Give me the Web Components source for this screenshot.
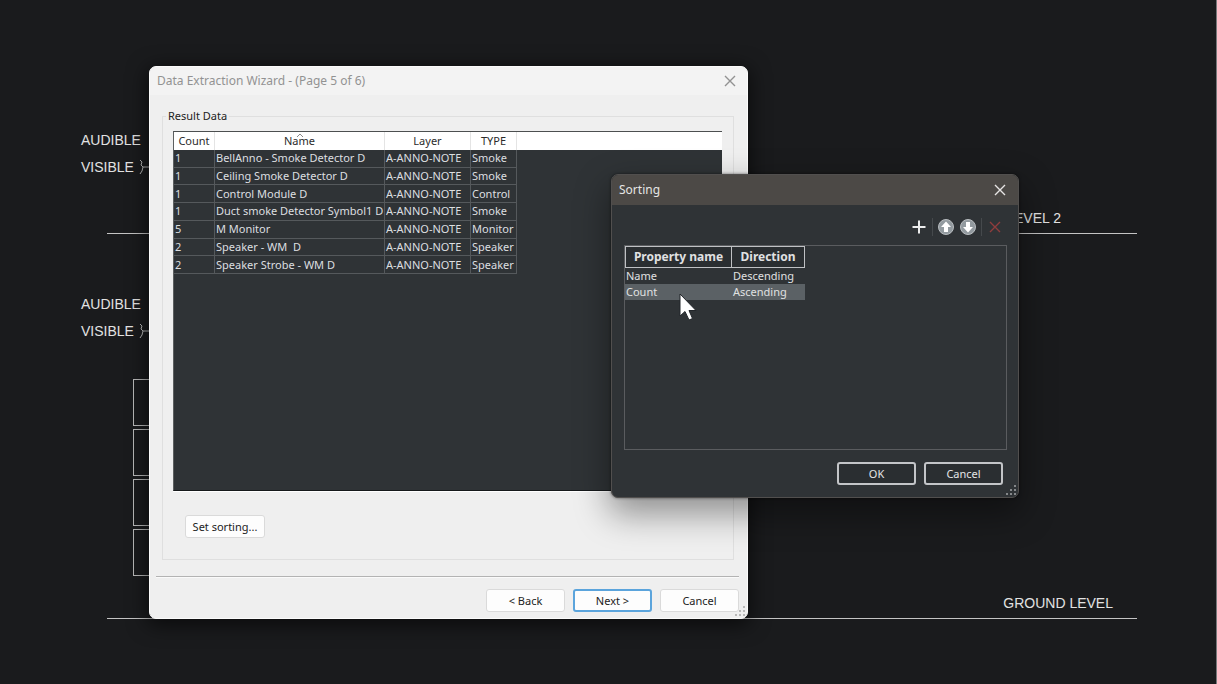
<!DOCTYPE html>
<html lang="en">
<head>
<meta charset="utf-8">
<meta name="viewport" content="width=device-width, initial-scale=1">
<title>Data Extraction Wizard</title>
<style>
html, body { margin: 0; height: 100%; background: #1a1b1d; }
body { font: 11px/16px "Noto Sans", "Open Sans", sans-serif; overflow: hidden; }
</style>
</head>
<body>
<work-desktop></work-desktop>

<script>
function define(name, html, setup) {
  const tpl = document.createElement('template');
  tpl.innerHTML = html;
  customElements.define(name, class extends HTMLElement {
    constructor() {
      super();
      this.attachShadow({ mode: 'open' }).append(tpl.content.cloneNode(true));
    }
    connectedCallback() { if (setup) setup(this, this.shadowRoot); }
  });
}

/* Push button in light and dark variants */
define('push-button', `
<style>
:host { display: block; width: 79px; height: 23px; }
button { box-sizing: border-box; width: 100%; height: 100%; padding: 0; font: inherit; color: #222;
  background: #fdfdfd; border: 1px solid #dadada; border-radius: 3px; }
:host([primary]) button { border: 2px solid #5ba4dc; }
:host([dark]) button { color: #e4e5e6; background: #2a2e31; border: 2px solid #c3c5c8; border-radius: 3px; }
</style>
<button type="button"><slot></slot></button>`);

/* Window frame with title bar, body and resize grip */
define('app-window', `
<style>
:host { box-sizing: border-box; display: flex; flex-direction: column; overflow: hidden; border-radius: 7px;
  border: 1px solid #fbfbfb; background: #efefef; color: #222; box-shadow: 0 4px 20px 2px #0009; }
header { flex: none; display: flex; align-items: center; justify-content: space-between; height: 28px;
  padding: 0 10px 0 7px; background: #f3f3f3; color: #929292; font-size: 12px; }
h1 { margin: 0; font: inherit; white-space: nowrap; }
button { display: block; width: 14px; height: 14px; padding: 0; border: 0; background: none; color: inherit; }
svg { display: block; }
main { flex: 1; min-height: 0; display: flex; flex-direction: column; }
.grip { position: absolute; right: 2px; bottom: 2px; color: #b8b8b8; }
:host([dark]) { background: #2f3336; color: #e0e1e2; border-color: #514f4e; box-shadow: 0 14px 34px 2px #0006, 0 0 3px #0008; }
:host([dark]) header { background: #4c4946; color: #e6e5e4; height: 30px; padding-right: 11px; }
:host([dark]) .grip { color: #85888a; }
</style>
<header>
  <h1></h1>
  <button type="button" aria-label="Close"><svg width="14" height="14" viewBox="0 0 14 14"><path d="M2 2 12 12M12 2 2 12" stroke="currentColor" stroke-width="1.4" fill="none"/></svg></button>
</header>
<main><slot></slot></main>
<svg class="grip" width="11" height="11" viewBox="0 0 11 11" fill="currentColor"><path d="M9 1h2v2H9zM5 5h2v2H5zM9 5h2v2H9zM1 9h2v2H1zM5 9h2v2H5zM9 9h2v2H9z"/></svg>`,
(el, root) => { root.querySelector('h1').textContent = el.getAttribute('heading'); });

/* Extracted rows */
define('result-grid', `
<style>
:host { box-sizing: border-box; display: block; overflow: hidden; background: #2f3336; color: #dddfe0;
  border: solid; border-width: 1px 0 1px 1px; border-color: #4c4f50 #fff #16191b #5c5f60; box-shadow: 0 1px #fff; }
.bar { background: linear-gradient(#fff 18px, transparent 18px); }
table { border-collapse: separate; border-spacing: 0; table-layout: fixed; width: 343px; height: 142px; }
th, td { padding: 0; line-height: 14px; white-space: pre; overflow: hidden; box-sizing: border-box; }
th { height: 18px; font-weight: 400; color: #2b2b2b; border-right: 1px solid #e4e4e4; position: relative; }
td { text-align: left; padding-left: 1px; border: solid #55595c; border-width: 0 1px 1px 0; }
svg { position: absolute; top: 1px; left: 50%; margin-left: -4px; }
</style>
<div class="bar"><table>
<colgroup><col style="width:41px"><col style="width:170px"><col style="width:86px"><col style="width:46px"></colgroup>
<thead><tr><th>Count</th><th>Name<svg width="8" height="5" viewBox="0 0 8 5"><path d="M1 4 4 1 7 4" fill="none" stroke="#8a8a8a"/></svg></th><th>Layer</th><th>TYPE</th></tr></thead>
<tbody></tbody></table></div>`,
(el, root) => {
  const rows = [
    [1, 'BellAnno - Smoke Detector D', 'Smoke'], [1, 'Ceiling Smoke Detector D', 'Smoke'],
    [1, 'Control Module D', 'Control'], [1, 'Duct smoke Detector Symbol1 D', 'Smoke'],
    [5, 'M Monitor', 'Monitor'], [2, 'Speaker - WM  D', 'Speaker'], [2, 'Speaker Strobe - WM D', 'Speaker']];
  root.querySelector('tbody').innerHTML = rows.map(([n, name, type]) =>
    `<tr><td>${n}</td><td>${name}</td><td>A-ANNO-NOTE</td><td>${type}</td></tr>`).join('');
});

/* Wizard page */
define('wizard-page', `
<style>
:host { flex: 1; min-height: 0; display: flex; flex-direction: column; padding: 13px 8px 6px 6px; }
fieldset { flex: 1; min-height: 0; min-width: 0; box-sizing: border-box; margin: 0 5px 0 6px; padding: 0 11px 21px 10px; border: 1px solid #dfdfdf; }
legend { padding: 0 2px; margin-left: -7px; height: 16px; }
.col { display: flex; flex-direction: column; height: 100%; padding-top: 7px; box-sizing: border-box; }
result-grid { flex: 1; min-height: 0; margin-bottom: 24px; }
.set { width: 80px; margin-left: 12px; }
hr { margin: 16px 0 12px; border: 0; height: 1px; background: #b3b3b3; box-shadow: 0 1px #fafafa; flex: none; width: 100%; }
footer { display: flex; justify-content: flex-end; gap: 8px; }
</style>
<fieldset><legend>Result Data</legend>
  <div class="col"><result-grid></result-grid><push-button class="set">Set sorting...</push-button></div>
</fieldset>
<hr>
<footer><push-button>&lt; Back</push-button><push-button primary>Next &gt;</push-button><push-button>Cancel</push-button></footer>`);

/* Toolbar of the sorting window */
define('sort-toolbar', `
<style>
:host { display: flex; justify-content: flex-end; align-items: center; gap: 4px; height: 18px; padding-right: 3px; }
button { width: 18px; height: 18px; padding: 0; border: 0; background: none; }
i { width: 1px; height: 18px; background: #45494c; }
svg { display: block; }
</style>
<button type="button" aria-label="Add"><svg width="18" height="18" viewBox="0 0 18 18"><path d="M9 2.5v13M2.500 9h13" stroke="#eceded" stroke-width="2"/></svg></button>
<i></i>
<button type="button" aria-label="Move up"><svg width="18" height="18" viewBox="0 0 18 18"><circle cx="9" cy="9" r="7.500" fill="#929a9f" stroke="#b9bdc0"/><path d="M9 3.500 14 9h-3v5H7V9H4z" fill="#fff"/></svg></button>
<button type="button" aria-label="Move down"><svg width="18" height="18" viewBox="0 0 18 18"><circle cx="9" cy="9" r="7.500" fill="#929a9f" stroke="#b9bdc0"/><path d="M9 14.500 14 9h-3V4H7v5H4z" fill="#fff"/></svg></button>
<i></i>
<button type="button" aria-label="Remove"><svg width="18" height="18" viewBox="0 0 18 18"><path d="M4 4 14 14M14 4 4 14" stroke="#8f3d3d" stroke-width="1.400"/></svg></button>`);

/* Sorting form */
define('sort-form', `
<style>
:host { flex: 1; min-height: 0; display: flex; flex-direction: column; padding: 13px 11px 12px 12px; }
.list { flex: 1; min-height: 0; margin-top: 9px; border: 1px solid #5a5c5f; overflow: hidden; }
table { border-collapse: separate; border-spacing: 0; table-layout: fixed; width: 180px; }
th { box-sizing: border-box; height: 22px; padding: 0; font-weight: 700; font-size: 12px; border: 1px solid #bfc1c4; background: #2a2e31; white-space: nowrap; }
th + th { border-left-width: 0; }
td { padding: 0 0 0 1px; height: 16px; line-height: 16px; }
.on td { background: #5b6165; }
sort-toolbar { flex: none; }
footer { display: flex; justify-content: flex-end; gap: 8px; margin: 12px 4px 0 0; }
</style>
<sort-toolbar></sort-toolbar>
<div class="list"><table>
<colgroup><col style="width:107px"><col style="width:73px"></colgroup>
<thead><tr><th>Property name</th><th>Direction</th></tr></thead>
<tbody><tr><td>Name</td><td>Descending</td></tr><tr class="on"><td>Count</td><td>Ascending</td></tr></tbody>
</table></div>
<footer><push-button dark>OK</push-button><push-button dark>Cancel</push-button></footer>`);

/* Riser diagram behind the windows */
define('riser-drawing', `
<style>
:host { display: block; position: absolute; inset: 0; color: #e2e2e2; font: 14px/16px "Liberation Sans", Arial, sans-serif; border-right: 1px solid #77797b; }
.level { position: absolute; left: 107px; right: 79px; height: 1px; background: #c4c4c4; }
.level span { position: absolute; bottom: 8px; right: 24px; white-space: nowrap; }
.level.two span { right: 76px; }
.two { top: 233px; } .ground { top: 618px; }
.device { position: absolute; left: 81px; display: grid; row-gap: 11px; }
.device div { display: flex; align-items: center; gap: 5px; }
.panels { position: absolute; left: 133px; top: 379px; width: 60px; display: flex; flex-direction: column; gap: 3px; }
.panels i { box-sizing: border-box; height: 47px; border: 1px solid #b9b9b9; }
</style>
<div class="device" style="top:132px"><div>AUDIBLE</div><div>VISIBLE <svg width="12" height="16" viewBox="0 0 12 16"><path d="M1 1 3 3 2 6 4 8 3 12 1 15M4 8H12" fill="none" stroke="#bbb"/></svg></div></div>
<div class="device" style="top:296px"><div>AUDIBLE</div><div>VISIBLE <svg width="12" height="16" viewBox="0 0 12 16"><path d="M1 1 3 3 2 6 4 8 3 12 1 15M4 8H12" fill="none" stroke="#bbb"/></svg></div></div>
<div class="level two"><span>LEVEL 2</span></div>
<div class="panels"><i></i><i></i><i></i><i></i></div>
<div class="level ground"><span>GROUND LEVEL</span></div>`);

/* Desktop holding the drawing, both windows and the pointer */
define('work-desktop', `
<style>
:host { display: block; position: relative; height: 100vh; overflow: hidden; background: #1a1b1d; }
app-window { position: absolute; }
.wizard { left: 149px; right: 469px; top: 66px; bottom: 65px; }
.sorting { left: 611px; right: 198px; top: 174px; bottom: 186px; }
.pointer { position: absolute; left: 678px; top: 292px; }
</style>
<riser-drawing></riser-drawing>
<app-window class="wizard" heading="Data Extraction Wizard - (Page 5 of 6)"><wizard-page></wizard-page></app-window>
<app-window class="sorting" dark heading="Sorting"><sort-form></sort-form></app-window>
<svg class="pointer" width="20" height="30" viewBox="0 0 20 30"><path d="M2 2V24L7 19.500 11 28 14.500 26.500 11 18.500H18Z" fill="#fff" stroke="#22262a"/></svg>`);
</script>
</body>
</html>
